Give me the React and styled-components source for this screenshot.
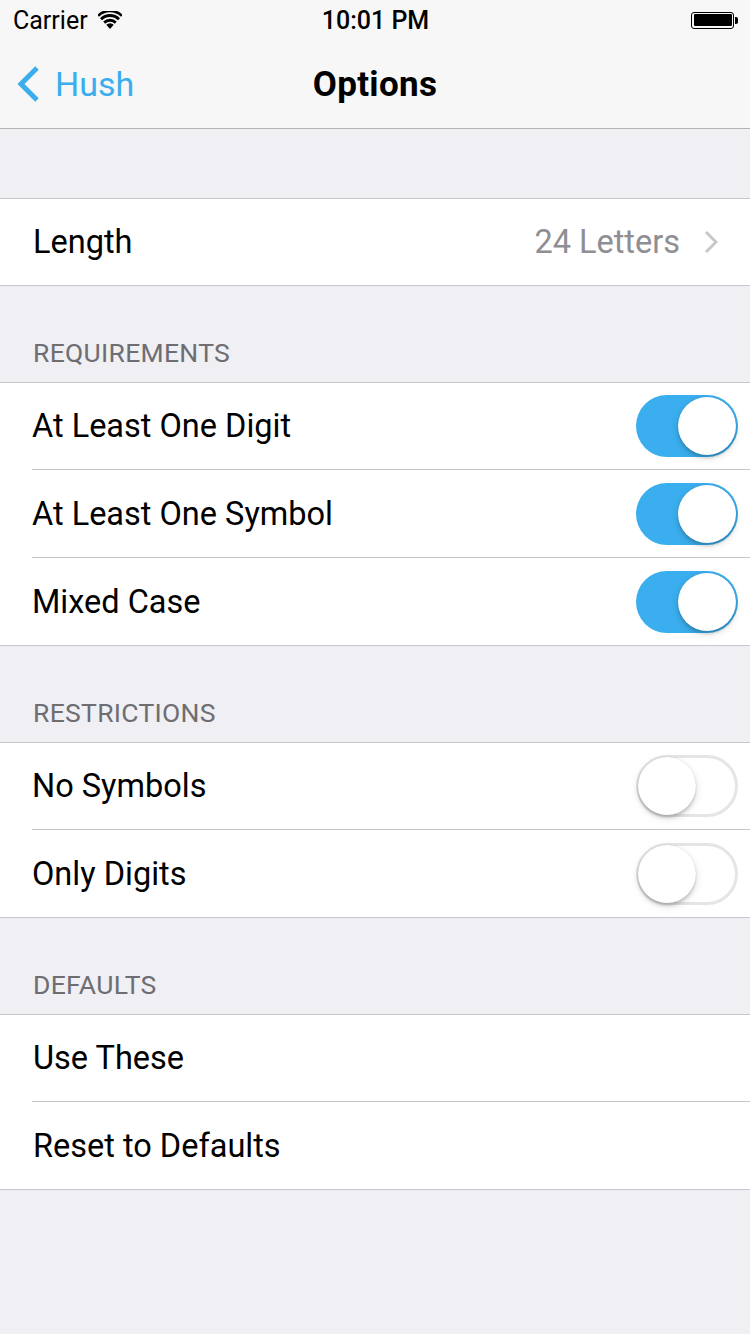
import React from 'react';
import styled, { createGlobalStyle } from 'styled-components';

const Global = createGlobalStyle`
  html, body {
    margin: 0;
    padding: 0;
    background: #efeff4;
  }
  body {
    font-family: Roboto, "Liberation Sans", sans-serif;
    -webkit-font-smoothing: antialiased;
  }
`;

const Page = styled.div`
  width: 750px;
  min-height: 1334px;
  background: #efeff4;
`;

const Top = styled.header`
  background: #f7f7f8;
  border-bottom: 1px solid #b2b2b2;
`;

const StatusBar = styled.div`
  height: 40px;
  display: grid;
  grid-template-columns: 1fr auto 1fr;
  align-items: center;
  padding: 0 12px 0 13px;
  font-size: 25px;
  color: #000;
`;

const Carrier = styled.div`
  display: flex;
  align-items: center;
  gap: 10px;
`;

const Time = styled.div`
  font-weight: 500;
  font-size: 25px;
`;

const Battery = styled.div`
  justify-self: end;
  display: flex;
  align-items: center;
`;

const BatteryBody = styled.div`
  width: 43px;
  height: 17px;
  border: 1.5px solid #000;
  border-radius: 3px;
  padding: 1.5px;
  box-sizing: border-box;
  &::after {
    content: '';
    display: block;
    width: 100%;
    height: 100%;
    background: #000;
    border-radius: 1px;
  }
`;

const BatteryTip = styled.div`
  width: 3px;
  height: 7px;
  background: #000;
  border-radius: 0 2px 2px 0;
  margin-left: 1px;
`;

const NavBar = styled.nav`
  height: 88px;
  display: grid;
  grid-template-columns: 1fr auto 1fr;
  align-items: center;
  padding: 0 16px;
`;

const Back = styled.div`
  display: flex;
  align-items: center;
  gap: 13px;
  color: #3aaeed;
  font-size: 34px;
`;

const Title = styled.div`
  font-size: 35px;
  font-weight: 700;
  color: #000;
  letter-spacing: 0.3px;
`;

const Spacer = styled.div`
  height: 69px;
`;

const SectionHeader = styled.div`
  height: 96px;
  box-sizing: border-box;
  padding: 0 33px 14px;
  display: flex;
  align-items: flex-end;
  font-size: 26.5px;
  color: #6d6d72;
  letter-spacing: 0.3px;
`;

const Group = styled.section`
  background: #fff;
  border-top: 1px solid #c8c7cc;
  border-bottom: 1px solid #c8c7cc;
`;

const Row = styled.div`
  height: ${(p) => (p.$first ? '86px' : '87px')};
  display: flex;
  align-items: center;
  padding-right: 12px;
  margin-left: 32px;
  border-top: ${(p) => (p.$first ? 'none' : '1px solid #c8c7cc')};
  font-size: 32.5px;
  color: #000;
`;

const Label = styled.div`
  flex: 1;
  padding-left: ${(p) => (p.$shift ? '1px' : '0')};
`;

const Detail = styled.div`
  color: #8e8e93;
  display: flex;
  align-items: center;
  gap: 24px;
  padding-right: 20px;
`;

const Track = styled.div`
  width: 102px;
  height: 62px;
  border-radius: 31px;
  box-sizing: border-box;
  position: relative;
  background: ${(p) => (p.$on ? '#3aaeee' : '#fff')};
  border: ${(p) => (p.$on ? 'none' : '3px solid #e5e5e5')};
`;

const Knob = styled.div`
  position: absolute;
  width: 58px;
  height: 58px;
  border-radius: 50%;
  background: #fff;
  top: ${(p) => (p.$on ? '2px' : '-1px')};
  left: ${(p) => (p.$on ? '42px' : '-1px')};
  box-shadow: 0 3px 3px rgba(0, 0, 0, 0.15), 0 3px 8px rgba(0, 0, 0, 0.12),
    0 0 1px rgba(0, 0, 0, 0.2);
`;

const Toggle = ({ on }) => (
  <Track $on={on}>
    <Knob $on={on} />
  </Track>
);

const Wifi = () => (
  <svg width="24" height="18" viewBox="0 0 22 17">
    <path d="M11 17 L7.5 13 A5 5 0 0 1 14.5 13 Z" fill="#000" />
    <path d="M4.6 10 A9 9 0 0 1 17.4 10 L15.6 12 A6.4 6.4 0 0 0 6.4 12 Z" fill="#000" />
    <path d="M1.6 6.8 A13.2 13.2 0 0 1 20.4 6.8 L18.6 8.8 A10.6 10.6 0 0 0 3.4 8.8 Z" fill="#000" />
    <path d="M-1 3.6 A17 17 0 0 1 23 3.6 L21.4 5.5 A14.6 14.6 0 0 0 0.6 5.5 Z" fill="#000" />
  </svg>
);

const Chevron = ({ color, w, h, sw }) => (
  <svg width={w} height={h} viewBox={`0 0 ${w} ${h}`}>
    <polyline
      points={`${w - sw},${sw} ${sw},${h / 2} ${w - sw},${h - sw}`}
      fill="none"
      stroke={color}
      strokeWidth={sw}
    />
  </svg>
);

const Disclosure = () => (
  <svg width="14" height="24" viewBox="0 0 14 24">
    <polyline points="2,2 12,12 2,22" fill="none" stroke="#c7c7cc" strokeWidth="3" />
  </svg>
);

export default function App() {
  return (
    <Page>
      <Global />
      <Top>
        <StatusBar>
          <Carrier>
            Carrier
            <Wifi />
          </Carrier>
          <Time>10:01 PM</Time>
          <Battery>
            <BatteryBody />
            <BatteryTip />
          </Battery>
        </StatusBar>
        <NavBar>
          <Back>
            <Chevron color="#3aaeed" w={26} h={42} sw={5} />
            Hush
          </Back>
          <Title>Options</Title>
          <div />
        </NavBar>
      </Top>

      <Spacer />
      <Group>
        <Row $first>
          <Label $shift>Length</Label>
          <Detail>
            24 Letters
            <Disclosure />
          </Detail>
        </Row>
      </Group>

      <SectionHeader>REQUIREMENTS</SectionHeader>
      <Group>
        <Row $first>
          <Label>At Least One Digit</Label>
          <Toggle on />
        </Row>
        <Row>
          <Label>At Least One Symbol</Label>
          <Toggle on />
        </Row>
        <Row>
          <Label>Mixed Case</Label>
          <Toggle on />
        </Row>
      </Group>

      <SectionHeader>RESTRICTIONS</SectionHeader>
      <Group>
        <Row $first>
          <Label>No Symbols</Label>
          <Toggle />
        </Row>
        <Row>
          <Label>Only Digits</Label>
          <Toggle />
        </Row>
      </Group>

      <SectionHeader>DEFAULTS</SectionHeader>
      <Group>
        <Row $first>
          <Label $shift>Use These</Label>
        </Row>
        <Row>
          <Label $shift>Reset to Defaults</Label>
        </Row>
      </Group>
    </Page>
  );
}
